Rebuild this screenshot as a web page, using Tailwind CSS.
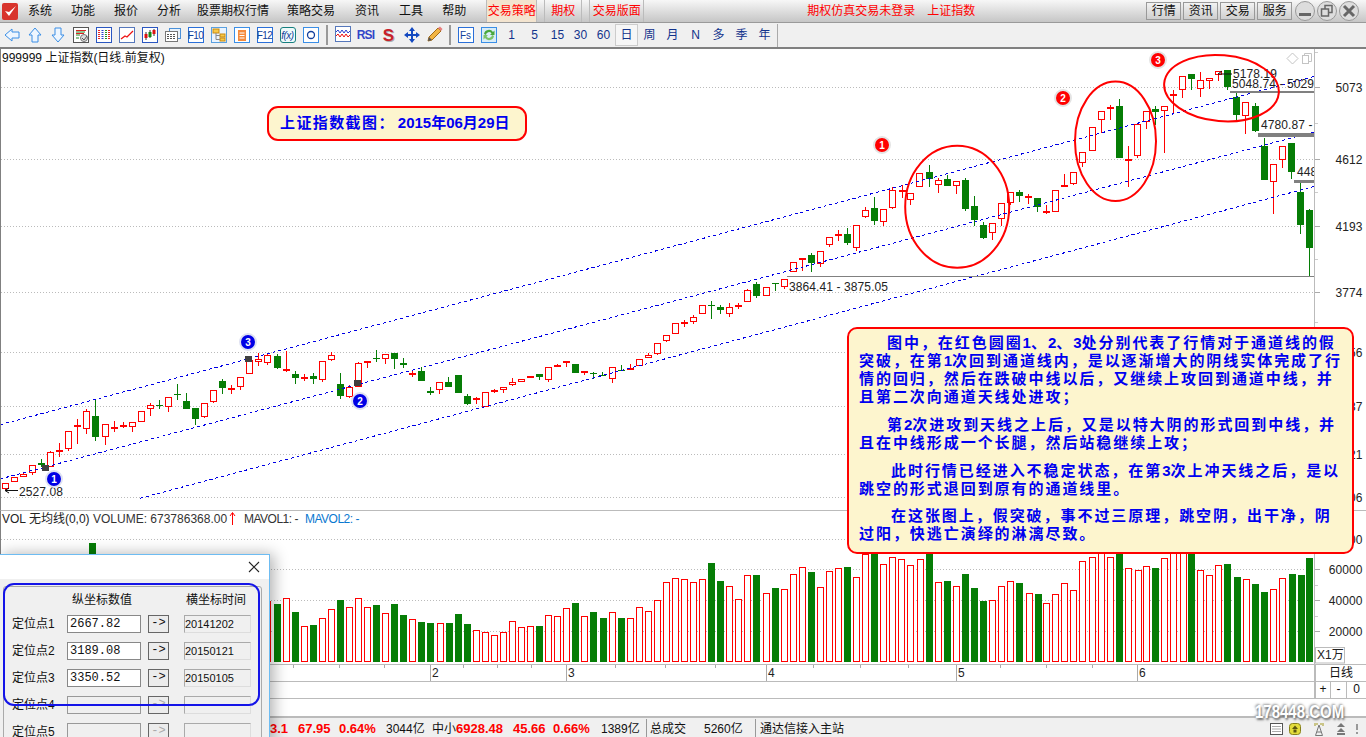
<!DOCTYPE html>
<html lang="zh-CN">
<head>
    <meta charset="UTF-8">
    <meta name="viewport" content="width=device-width, initial-scale=1.0">
    <title>上证指数 - 通道线假突破</title>
    <script src="https://cdn.jsdelivr.net/npm/@tailwindcss/browser@4"></script>
</head>
<body class="bg-white overflow-hidden font-['Liberation_Sans','Noto_Sans_CJK_SC',sans-serif] text-[12px] text-[#111]">
<div class="relative w-[1366px] h-[737px] overflow-hidden flex flex-col">

    <!-- title bar -->
    <div class="h-[23px] flex items-center border-b border-[#9a9a9a] bg-linear-to-b from-[#f7f7f7] to-[#c6c6c6] shrink-0">
        <svg class="ml-[2px] w-[16px] h-[17px]" viewBox="0 0 16 17"><rect width="16" height="17" rx="2" fill="#d8342c"/><path d="M3 8 L7 13 L14 3 L7 9 Z" fill="#fff"/></svg>
        <span class="ml-[10px]">系统</span>
        <span class="ml-[19px]">功能</span>
        <span class="ml-[19px]">报价</span>
        <span class="ml-[19px]">分析</span>
        <span class="ml-[16px]">股票期权行情</span>
        <span class="ml-[18px]">策略交易</span>
        <span class="ml-[20px]">资讯</span>
        <span class="ml-[20px]">工具</span>
        <span class="ml-[19px]">帮助</span>
        <span class="ml-[20px] h-[22px] w-[51px] flex items-center justify-center bg-[#f3e4cf] text-[#f00] border-x border-[#bbb]">交易策略</span>
        <span class="ml-[7px] h-[22px] w-[38px] flex items-center justify-center text-[#f00] border-x border-[#bbb]">期权</span>
        <span class="ml-[7px] h-[22px] w-[55px] flex items-center justify-center text-[#f00] border-x border-[#bbb]">交易版面</span>
        <span class="ml-[163px] text-[#f00]">期权仿真交易未登录</span>
        <span class="ml-[12px] text-[#f00]">上证指数</span>
        <div class="ml-[171px] flex gap-[2px]">
            <span class="w-[35px] h-[18px] flex items-center justify-center border border-[#999] bg-linear-to-b from-[#f2f2f2] to-[#cfcfcf]">行情</span>
            <span class="w-[35px] h-[18px] flex items-center justify-center border border-[#999] bg-linear-to-b from-[#f2f2f2] to-[#cfcfcf]">资讯</span>
            <span class="w-[35px] h-[18px] flex items-center justify-center border border-[#999] bg-linear-to-b from-[#f2f2f2] to-[#cfcfcf]">交易</span>
            <span class="w-[35px] h-[18px] flex items-center justify-center border border-[#999] bg-linear-to-b from-[#f2f2f2] to-[#cfcfcf]">服务</span>
        </div>
        <div class="ml-[3px] flex gap-[2px]">
            <svg class="w-[20px] h-[20px]" viewBox="0 0 20 20"><circle cx="10" cy="10" r="9.5" fill="#ddd" stroke="#999"/><rect x="4" y="12" width="12" height="3" fill="#666"/></svg>
            <svg class="w-[20px] h-[20px]" viewBox="0 0 20 20"><circle cx="10" cy="10" r="9.5" fill="#ddd" stroke="#999"/><rect x="8" y="4.5" width="7" height="7" fill="none" stroke="#666" stroke-width="1.5"/><rect x="4.5" y="8" width="7" height="7" fill="#ddd" stroke="#666" stroke-width="1.5"/></svg>
            <svg class="w-[20px] h-[20px]" viewBox="0 0 20 20"><circle cx="10" cy="10" r="9.5" fill="#ddd" stroke="#999"/><path d="M5 5 L15 15 M15 5 L5 15" stroke="#666" stroke-width="3"/></svg>
        </div>
    </div>

    <!-- toolbar -->
    <div class="h-[26px] flex items-center bg-[#f0f0f0] border-b-2 border-[#808080] shrink-0 text-[#12338c]">
        <div class="flex w-[326px]">
            <span class="w-[23px] flex justify-center"><svg class="w-[16px] h-[16px]" viewBox="0 0 16 16"><path d="M1 8 L8 2 V5 H15 V11 H8 V14 Z" fill="#eef6ff" stroke="#3a8ee6"/></svg></span>
            <span class="w-[23px] flex justify-center"><svg class="w-[16px] h-[16px]" viewBox="0 0 16 16"><path d="M8 1 L14 8 H11 V15 H5 V8 H2 Z" fill="#eef6ff" stroke="#3a8ee6"/></svg></span>
            <span class="w-[23px] flex justify-center"><svg class="w-[16px] h-[16px]" viewBox="0 0 16 16"><path d="M8 15 L14 8 H11 V1 H5 V8 H2 Z" fill="#eef6ff" stroke="#3a8ee6"/></svg></span>
            <span class="w-[23px] flex justify-center"><svg class="w-[16px] h-[16px]" viewBox="0 0 16 16"><rect x=".5" y=".5" width="15" height="15" fill="#fff" stroke="#555"/><path d="M3 3.5 H13 M3 6.5 H11" stroke="#d22"/><path d="M3 5 H12 M3 8 H7 M3 11 H6" stroke="#282"/><circle cx="11" cy="11" r="3.5" fill="#ddd" stroke="#777"/><path d="M9 11 L11 13 L14 9" fill="none" stroke="#555"/></svg></span>
            <span class="w-[23px] flex justify-center"><svg class="w-[16px] h-[16px]" viewBox="0 0 16 16"><rect x=".5" y=".5" width="15" height="15" fill="#fff" stroke="#2a56c0"/><path d="M3 3 V13" stroke="#e22" stroke-width="2" stroke-dasharray="1 1"/><path d="M6.500 3 V13" stroke="#2a3fd0" stroke-width="2" stroke-dasharray="1 1"/><path d="M10 3 V13" stroke="#292" stroke-width="2" stroke-dasharray="1 1"/><path d="M13 3 V13" stroke="#e22" stroke-width="2" stroke-dasharray="1 1"/></svg></span>
            <span class="w-[23px] flex justify-center"><svg class="w-[16px] h-[16px]" viewBox="0 0 16 16"><rect x=".5" y=".5" width="15" height="15" fill="#fff" stroke="#5577bb"/><path d="M2 12 L6 9 L8 10 L14 4" fill="none" stroke="#e11" stroke-width="1.300"/></svg></span>
            <span class="w-[23px] flex justify-center"><svg class="w-[16px] h-[16px]" viewBox="0 0 16 16"><rect x=".5" y=".5" width="15" height="15" fill="#fff" stroke="#2a56c0"/><path d="M4 5 V13 M8 3 V11 M12 2 V9" stroke="#333"/><rect x="2.500" y="7" width="3" height="4" fill="#d11"/><rect x="6.500" y="5" width="3" height="5" fill="#181"/><rect x="10.500" y="3" width="3" height="4" fill="#d11"/></svg></span>
            <span class="w-[23px] flex justify-center"><svg class="w-[16px] h-[16px]" viewBox="0 0 16 16"><rect x="4.500" y="1.500" width="11" height="10" fill="#e8f2fc" stroke="#4a90d8"/><rect x=".5" y="4.500" width="12" height="10" fill="#fff" stroke="#777"/><path d="M2 7.500 H11 M2 9.500 H11 M2 11.500 H11" stroke="#555" stroke-dasharray="2 1"/></svg></span>
            <span class="w-[23px] flex justify-center"><span class="w-[16px] h-[16px] flex items-center justify-center border border-[#2a6fd8] bg-white text-[10px] text-[#123f9c] tracking-[-0.5px]">F10</span></span>
            <span class="w-[23px] flex justify-center"><svg class="w-[16px] h-[16px]" viewBox="0 0 16 16"><rect x=".5" y=".5" width="15" height="15" fill="#eaf4ff" stroke="#5aa0e0"/><rect x="2" y="2" width="6" height="4" fill="#f7c948" stroke="#c88a10"/><rect x="9" y="7" width="5" height="3" fill="#f7c948" stroke="#c88a10"/><rect x="9" y="11" width="5" height="3" fill="#f7c948" stroke="#c88a10"/><path d="M5 6 V12.500 H9 M5 8.500 H9" fill="none" stroke="#888"/></svg></span>
            <span class="w-[23px] flex justify-center"><svg class="w-[16px] h-[16px]" viewBox="0 0 16 16"><rect x=".5" y=".5" width="15" height="15" fill="#fff" stroke="#3a8ee6"/><rect x="4" y="3" width="8" height="11" fill="#f58a3c"/><path d="M5.500 6 H10.500 M5.500 8.500 H10.500 M5.500 11 H10.500" stroke="#fff"/></svg></span>
            <span class="w-[23px] flex justify-center"><span class="w-[16px] h-[16px] flex items-center justify-center border border-[#2a6fd8] bg-white text-[10px] text-[#123f9c] tracking-[-0.5px]">F12</span></span>
            <span class="w-[23px] flex justify-center"><span class="w-[16px] h-[16px] flex items-center justify-center rounded-[3px] border border-[#167f7f] bg-[#eefafa] text-[10px] italic text-[#123f9c] tracking-[-0.5px]">f(x)</span></span>
            <span class="w-[23px] flex justify-center"><svg class="w-[16px] h-[16px]" viewBox="0 0 16 16"><rect x=".5" y=".5" width="15" height="15" fill="#fff" stroke="#3a8ee6"/><circle cx="8" cy="8" r="3.500" fill="none" stroke="#123f9c" stroke-width="1.300"/></svg></span>
        </div>
        <span class="w-[2px] h-[20px] bg-[#999]"></span>
        <div class="flex ml-[3px]">
            <span class="w-[23px] flex justify-center"><svg class="w-[16px] h-[16px]" viewBox="0 0 16 16"><rect x=".5" y=".5" width="15" height="15" fill="#fff" stroke="#5577bb"/><path d="M1 6 L3 4 L5 7 L7 4 L9 7 L11 4 L13 7 L15 5" fill="none" stroke="#2a3fd0"/><path d="M1 10 L3 8 L5 11 L7 8 L9 11 L11 8 L13 11 L15 9" fill="none" stroke="#e11"/></svg></span>
            <span class="w-[23px] flex justify-center items-center font-bold text-[12px] text-[#3344c8] tracking-[-0.8px]">RSI</span>
            <span class="w-[23px] flex justify-center items-center font-bold text-[17px] leading-[17px] text-[#c8202a] [text-shadow:1px_1px_0_#aaa]">S</span>
            <span class="w-[23px] flex justify-center"><svg class="w-[18px] h-[18px]" viewBox="0 0 18 18"><path d="M9 1 L12 5 H10 V8 H13 V6 L17 9 L13 12 V10 H10 V13 H12 L9 17 L6 13 H8 V10 H5 V12 L1 9 L5 6 V8 H8 V5 H6 Z" fill="#1248c0"/></svg></span>
            <span class="w-[23px] flex justify-center"><svg class="w-[16px] h-[16px]" viewBox="0 0 16 16"><path d="M1 15 L2 11 L11 2 L14 5 L5 14 Z" fill="#f2b544" stroke="#a36a16"/><path d="M11 2 L13 0.500 L15.500 3 L14 5 Z" fill="#e88080"/><path d="M1 15 L2 11 L5 14 Z" fill="#555"/></svg></span>
        </div>
        <span class="ml-[3px] w-[2px] h-[20px] bg-[#999]"></span>
        <span class="ml-[3px] w-[23px] flex justify-center"><span class="w-[16px] h-[16px] flex items-center justify-center border border-[#2a6fd8] bg-white text-[10px] text-[#123f9c]">Fs</span></span>
        <span class="w-[23px] flex justify-center"><svg class="w-[16px] h-[16px]" viewBox="0 0 16 16"><rect x=".5" y=".5" width="15" height="15" fill="#d8ecf8" stroke="#3a8ee6"/><path d="M3 7 A5 5 0 0 1 12 5 L13.500 3.500 V8 H9 L10.500 6.500 A3 3 0 0 0 5 8 Z" fill="#49a83c"/><path d="M13 9 A5 5 0 0 1 4 11 L2.500 12.500 V8 H7 L5.500 9.500 A3 3 0 0 0 11 8 Z" fill="#7cc46a"/></svg></span>
        <div class="flex items-center">
            <span class="w-[23px] text-center">1</span>
            <span class="w-[23px] text-center">5</span>
            <span class="w-[23px] text-center">15</span>
            <span class="w-[23px] text-center">30</span>
            <span class="w-[23px] text-center">60</span>
            <span class="w-[23px] h-[22px] flex items-center justify-center bg-[#f6f6f6] border border-[#ccc]">日</span>
            <span class="w-[23px] text-center">周</span>
            <span class="w-[23px] text-center">月</span>
            <span class="w-[23px] text-center">N</span>
            <span class="w-[23px] text-center">多</span>
            <span class="w-[23px] text-center">季</span>
            <span class="w-[23px] text-center">年</span>
        </div>
        <span class="ml-[1px] w-px h-[23px] bg-[#aaa]"></span>
    </div>

    <!-- price pane, svg coordinates are screen coordinates -->
    <div class="h-[462px] border-b border-[#bbb] border-l border-l-[#808080] shrink-0">
        <svg id="price" class="w-[1365px] h-[461px]" viewBox="1 49 1365 461">
            <defs><clipPath id="paneclip"><rect x="0" y="49" width="1314" height="461"/></clipPath></defs>
            <g id="pricegrid"></g>
            <g id="candles"></g>
            <g stroke="#0000e6" stroke-width="1" stroke-dasharray="3 3" shape-rendering="crispEdges">
                <line x1="0" y1="424.700" x2="1314" y2="76.500"/>
                <line x1="0" y1="479" x2="1314" y2="132"/>
                <line x1="140" y1="498.300" x2="1314" y2="186.500"/>
            </g>
            <g fill="#808080" shape-rendering="crispEdges">
                <rect x="787" y="276" width="527" height="1"/>
                <rect x="1230" y="91" width="84" height="2"/>
                <rect x="1258" y="133" width="56" height="4"/>
                <rect x="1294" y="180" width="20" height="3"/>
            </g>
            <g fill="#404040">
                <rect x="42" y="465" width="7" height="6"/>
                <rect x="245" y="356" width="7" height="6"/>
                <rect x="354" y="380" width="7" height="6"/>
            </g>
            <g clip-path="url(#paneclip)" font-size="12" letter-spacing=".1" fill="#222">
                <text x="19" y="496">2527.08</text>
                <path d="M5 490.500 H18 M5 490.500 L9 488 M5 490.500 L9 493" stroke="#111" fill="none"/>
                <text x="789" y="291">3864.41 - 3875.05</text>
                <text x="1233" y="78">5178.19</text>
                <path d="M1218 74 L1222 71 M1218 74 H1232" stroke="#111" fill="none"/>
                <text x="1232" y="87.500">5048.74 - 5029</text>
                <text x="1261" y="129">4780.87 -</text>
                <text x="1297" y="176">448</text>
            </g>
            <g fill="none" stroke="#f00" stroke-width="2">
                <ellipse cx="957.200" cy="206.800" rx="52" ry="61"/>
                <ellipse cx="1115.500" cy="141.300" rx="40.500" ry="59.700"/>
                <ellipse cx="1221.500" cy="88.200" rx="57.500" ry="33" transform="rotate(5 1221.500 88.200)"/>
            </g>
            <g text-anchor="middle" font-size="10" font-weight="bold" fill="#fff" stroke-width="2">
                <circle cx="882" cy="145" r="8" fill="#f00" stroke="#e4e4e4"/><text x="882" y="148.500">1</text>
                <circle cx="1063" cy="98" r="8" fill="#f00" stroke="#e4e4e4"/><text x="1063" y="101.500">2</text>
                <circle cx="1158" cy="60" r="8" fill="#f00" stroke="#e4e4e4"/><text x="1158" y="63.500">3</text>
                <circle cx="54" cy="479" r="8" fill="#0000e6" stroke="#dfe2f2"/><text x="54" y="482.500">1</text>
                <circle cx="360" cy="401" r="8" fill="#0000e6" stroke="#dfe2f2"/><text x="360" y="404.500">2</text>
                <circle cx="248" cy="342" r="8" fill="#0000e6" stroke="#dfe2f2"/><text x="248" y="345.500">3</text>
            </g>
            <path d="M1292.500 53 L1298 58.500 L1292.500 64 L1287 58.500 Z" fill="none" stroke="#c4c4c4"/>
            <rect x="1302.500" y="55.500" width="6" height="8" fill="#fff" stroke="#c4c4c4"/>
            <path d="M1304.500 55 V53.500 H1311.500 V61.500 H1309" fill="none" stroke="#c4c4c4"/>
            <text x="2" y="62" font-size="12" fill="#111">999999 上证指数(日线.前复权)</text>
        </svg>
    </div>

    <!-- volume pane -->
    <div class="h-[154px] border-b border-[#bbb] border-l border-l-[#808080] shrink-0">
        <svg id="volume" class="w-[1365px] h-[153px]" viewBox="1 511 1365 153">
            <g id="volgrid"></g>
            <g id="volbars"></g>
            <text x="2" y="523" font-size="12" fill="#222">VOL 无均线(0,0)</text>
            <text x="93" y="523" font-size="12" fill="#333">VOLUME: 673786368.00</text>
            <path d="M232.500 525 V513 M230 516 L232.500 512.500 L235 516" fill="none" stroke="#f00"/>
            <text x="244" y="523" font-size="12" letter-spacing="-.5" fill="#333">MAVOL1: -</text>
            <text x="305" y="523" font-size="12" letter-spacing="-.5" fill="#0a78d0">MAVOL2: -</text>
            <rect x="1315.500" y="647.500" width="29" height="15.500" fill="#fff" stroke="#bbb"/>
            <text x="1317" y="659" font-size="12" fill="#222">X1万</text>
        </svg>
    </div>

    <!-- time axis -->
    <div class="h-[17px] flex border-b border-[#bbb] shrink-0">
        <svg id="timeaxis" class="w-[1314px] h-[16px]" viewBox="0 665 1314 16"></svg>
        <div class="flex-1 flex items-center justify-center border-l-2 border-[#bbb]">日线</div>
    </div>
    <div class="h-[17px] flex border-b border-[#bbb] shrink-0">
        <div class="w-[1314px]"></div>
        <div class="flex-1 flex border-l-2 border-[#bbb] text-center leading-[15px]">
            <span class="w-[15px] border-r border-[#bbb]">+</span>
            <span class="w-[16px] border-r border-[#bbb]">-</span>
            <span class="flex-1">0</span>
        </div>
    </div>
    <div class="h-[19px] border-b-2 border-[#bbb] shrink-0"></div>

    <!-- status bar -->
    <div class="h-[21px] flex items-center bg-[#f0f0f0] shrink-0 pl-[270px] whitespace-nowrap">
        <span class="w-[28px] font-bold text-[13px] text-[#f00]">3.1</span>
        <span class="w-[41px] font-bold text-[13px] text-[#f00]">67.95</span>
        <span class="w-[47px] font-bold text-[13px] text-[#f00]">0.64%</span>
        <span class="w-[46px]">3044亿</span>
        <span class="w-[24px]">中小</span>
        <span class="w-[57px] font-bold text-[13px] text-[#f00]">6928.48</span>
        <span class="w-[40px] font-bold text-[13px] text-[#f00]">45.66</span>
        <span class="w-[48px] font-bold text-[13px] text-[#f00]">0.66%</span>
        <span class="w-[45px]">1389亿</span>
        <span class="h-[19px] w-px bg-[#999]"></span>
        <span class="ml-[3px] w-[54px]">总成交</span>
        <span class="w-[51px]">5260亿</span>
        <span class="h-[19px] w-px bg-[#999]"></span>
        <span class="ml-[4px]">通达信接入主站</span>
        <div class="ml-auto mr-[7px] flex items-center gap-[6px]">
            <svg class="w-[13px] h-[12px]" viewBox="0 0 13 12"><rect x=".5" y=".5" width="12" height="11" fill="#fff" stroke="#555"/><path d="M2 3.500 H11 M2 6 H11 M2 8.500 H11" stroke="#aaa"/></svg>
            <svg class="w-[12px] h-[12px]" viewBox="0 0 12 12"><rect x=".5" y=".5" width="11" height="11" rx="3" fill="#e3dc3c" stroke="#86801a"/><path d="M6 2.500 L9 6 H3 Z M4.500 6.500 H7.500 V9.500 H4.500 Z" fill="#5b5610"/></svg>
            <svg class="ml-[6px] w-[12px] h-[14px]" viewBox="0 0 12 14"><path d="M6 3 L2.500 13.500 H9.500 Z M3.800 10 H8.200" fill="none" stroke="#777"/><path d="M2 1 V4 M10 1 V4 M4 1 V3 M8 1 V3" stroke="#a39a20"/></svg>
            <svg class="ml-[5px] w-[10px] h-[12px]" viewBox="0 0 10 12"><path d="M5 0 L9 4 H1 Z M5 5 L9 9 H1 Z M1 10 H9 V12 H1 Z" fill="#777"/></svg>
            <svg class="ml-[3px] w-[4px] h-[10px]" viewBox="0 0 4 10"><rect x="1" y="0" width="2" height="6" fill="#999"/><rect x="1" y="8" width="2" height="2" fill="#999"/></svg>
        </div>
    </div>

    <!-- top note -->
    <div class="absolute left-[267px] top-[106px] w-[260px] h-[35px] rounded-[11px] border-2 border-[#f00] bg-[#fdf5ce] flex items-center pl-[11px] whitespace-nowrap font-bold text-[15px] text-[#0000f0] tracking-[1.400px]">上证指数截图：<span class="ml-[3px] tracking-normal">2015年06月29日</span></div>

    <!-- explanation note -->
    <div class="absolute left-[847px] top-[327px] w-[507px] h-[227px] rounded-[10px] border-2 border-[#f00] bg-[#fdf5ce] pl-[10px] pt-[5px] whitespace-nowrap font-bold text-[15px] leading-[18px] text-[#0000f0] tracking-[1.950px]">
        <div class="mb-[10px]">
            <div class="pl-[28px]">图中，在红色圆圈<span class="tracking-normal">1</span>、<span class="tracking-normal">2</span>、<span class="tracking-normal">3</span>处分别代表了行情对于通道线的假</div>
            <div>突破，在第<span class="tracking-normal">1</span>次回到通道线内，是以逐渐增大的阴线实体完成了行</div>
            <div>情的回归，然后在跌破中线以后，又继续上攻回到通道中线，并</div>
            <div>且第二次向通道天线处进攻；</div>
        </div>
        <div class="mb-[10px]">
            <div class="pl-[28px]">第<span class="tracking-normal">2</span>次进攻到天线之上后，又是以特大阴的形式回到中线，并</div>
            <div>且在中线形成一个长腿，然后站稳继续上攻；</div>
        </div>
        <div class="mb-[9px]">
            <div class="pl-[32px]">此时行情已经进入不稳定状态，在第<span class="tracking-normal">3</span>次上冲天线之后，是以</div>
            <div>跳空的形式退回到原有的通道线里。</div>
        </div>
        <div>
            <div class="pl-[32px]">在这张图上，假突破，事不过三原理，跳空阴，出干净，阴</div>
            <div>过阳，快逃亡演绎的淋漓尽致。</div>
        </div>
    </div>

    <!-- locate dialog, cut off by the bottom of the window -->
    <div class="absolute left-[-1px] top-[554px] w-[271px] h-[190px] border border-[#6dbcf2] bg-[#f0f0f0] shadow-[4px_0_14px_rgba(0,0,0,0.3)]">
        <div class="h-[24px] bg-white flex items-center justify-end pr-[9px]">
            <svg class="w-[12px] h-[12px]" viewBox="0 0 12 12"><path d="M1 1 L11 11 M11 1 L1 11" stroke="#222" stroke-width="1.100"/></svg>
        </div>
        <div class="ml-[3px] mt-[7px] w-[259px] h-[160px] border border-[#aaa] rounded-[3px] pl-[8px]">
            <div class="flex h-[14px] mt-[6px] mb-[8px] leading-[14px]">
                <span class="ml-[60px] w-[114px]">纵坐标数值</span>
                <span>横坐标时间</span>
            </div>
            <div class="flex items-center h-[18px] mb-[9px]">
                <span class="w-[55px]">定位点1</span>
                <span class="w-[74px] h-[18px] bg-white border border-[#888] pl-[2px] font-['Liberation_Mono',monospace] leading-[16px]">2667.82</span>
                <span class="ml-[7px] w-[21px] h-[18px] border border-[#666] bg-[#ececec] text-center font-['Liberation_Mono',monospace] leading-[15px]">-&gt;</span>
                <span class="ml-[15px] w-[67px] h-[18px] border border-[#aaa] border-r-[#ddd] border-b-[#ddd] text-[11px] leading-[16px]">20141202</span>
            </div>
            <div class="flex items-center h-[18px] mb-[9px]">
                <span class="w-[55px]">定位点2</span>
                <span class="w-[74px] h-[18px] bg-white border border-[#888] pl-[2px] font-['Liberation_Mono',monospace] leading-[16px]">3189.08</span>
                <span class="ml-[7px] w-[21px] h-[18px] border border-[#666] bg-[#ececec] text-center font-['Liberation_Mono',monospace] leading-[15px]">-&gt;</span>
                <span class="ml-[15px] w-[67px] h-[18px] border border-[#aaa] border-r-[#ddd] border-b-[#ddd] text-[11px] leading-[16px]">20150121</span>
            </div>
            <div class="flex items-center h-[18px] mb-[9px]">
                <span class="w-[55px]">定位点3</span>
                <span class="w-[74px] h-[18px] bg-white border border-[#888] pl-[2px] font-['Liberation_Mono',monospace] leading-[16px]">3350.52</span>
                <span class="ml-[7px] w-[21px] h-[18px] border border-[#666] bg-[#ececec] text-center font-['Liberation_Mono',monospace] leading-[15px]">-&gt;</span>
                <span class="ml-[15px] w-[67px] h-[18px] border border-[#aaa] border-r-[#ddd] border-b-[#ddd] text-[11px] leading-[16px]">20150105</span>
            </div>
            <div class="flex items-center h-[18px] mb-[9px]">
                <span class="w-[55px]">定位点4</span>
                <span class="w-[74px] h-[18px] border border-[#999]"></span>
                <span class="ml-[7px] w-[21px] h-[18px] border border-[#666] text-[#aaa] bg-[#ececec] text-center font-['Liberation_Mono',monospace] leading-[15px]">-&gt;</span>
                <span class="ml-[15px] w-[67px] h-[18px] border border-[#aaa] border-r-[#ddd] border-b-[#ddd]"></span>
            </div>
            <div class="flex items-center h-[18px]">
                <span class="w-[55px]">定位点5</span>
                <span class="w-[74px] h-[18px] border border-[#999]"></span>
                <span class="ml-[7px] w-[21px] h-[18px] border border-[#666] text-[#aaa] bg-[#ececec] text-center font-['Liberation_Mono',monospace] leading-[15px]">-&gt;</span>
                <span class="ml-[15px] w-[67px] h-[18px] border border-[#aaa] border-r-[#ddd] border-b-[#ddd]"></span>
            </div>
        </div>
    </div>
    <div class="absolute left-[3px] top-[583px] w-[257px] h-[123px] rounded-[11px] border-2 border-[#1414e8]"></div>

    <!-- watermark -->
    <div class="absolute left-[1255px] top-[702px] font-bold text-[15px] leading-[20px] text-white scale-y-125 [text-shadow:1px_1px_2px_#666,-1px_-1px_2px_#999] whitespace-nowrap">178448.COM</div>
</div>

<script>
    const RED = '#f00';
    const GREEN = '#067d06';
    const svgNs = (id, html) => { document.getElementById(id).innerHTML = html; };

    // candles read off the 3x crops: [x, high, bodyTop, bodyBottom, low, isGreen]
    const candleSets = [
        { ox: 0, oy: 330, rows: [
            [16,460,460,478,480,0],[43,442,442,457,457,0],[70,428,431,440,442,0],[97,406,406,430,435,0],[124,388,400,405,410,1],
            [151,363,367,410,412,0],[178,340,361,365,380,0],[205,304,304,358,362,0],[232,267,284,289,342,0],[259,238,244,298,312,0],
            [286,210,259,320,333,1],[316,283,283,322,345,0],[343,273,290,296,305,0],[370,277,284,289,295,0],[397,277,277,292,305,0],
            [424,244,244,277,277,0],[451,220,226,238,258,0],[478,210,225,227,238,1],[505,202,202,230,245,0],[532,162,192,194,210,1],
            [559,189,213,236,238,1],[586,235,235,266,284,1],[613,220,220,260,265,0],[640,181,181,217,220,0],[667,148,154,174,192,1],
            [694,165,175,178,192,0],[721,142,142,172,179,0],[748,78,90,133,133,0],[775,68,88,96,108,0],[802,72,76,100,104,0],
            [832,72,78,113,117,1],[859,62,118,124,126,0],[886,124,132,143,162,1],[913,132,142,148,153,0],[940,128,138,147,162,1],
            [967,94,94,150,157,0],[994,66,76,91,92,0],[1021,128,163,197,207,1],[1048,165,172,200,205,0],[1075,97,100,170,172,0],
            [1102,92,92,100,113,0],[1129,60,84,86,95,1],[1156,73,73,88,101,0],[1183,70,70,86,117,1],[1210,84,99,106,114,1],
            [1237,120,128,131,140,0],[1264,112,124,152,153,1],[1291,172,183,190,195,1],[1318,157,157,181,192,0],[1345,140,155,170,172,1]
        ]},
        { ox: 450, oy: 200, rows: [
            [25,525,525,578,578,1],[52,582,588,612,614,1],[79,590,595,600,612,0],[106,577,577,620,622,0],[133,567,571,576,578,0],
            [160,561,561,571,578,0],[187,535,546,556,558,0],[214,538,538,547,547,0],[241,527,527,535,535,0],[268,522,522,532,540,1],
            [295,502,502,540,546,0],[322,493,496,502,502,0],[349,484,484,489,500,0],[376,492,492,518,518,1],[403,512,512,520,524,0],
            [430,517,520,523,536,1],[457,517,525,526,528,1],[487,502,502,538,548,0],[514,496,509,511,512,1],[541,492,505,509,510,0],
            [568,478,478,497,497,0],[595,460,466,475,475,0],[622,430,430,461,465,0],[649,406,406,422,426,0],[676,370,370,403,403,0],
            [703,360,366,371,382,0],[730,345,352,365,372,0],[757,316,316,341,341,0],[784,304,316,318,356,1],[811,316,321,329,342,1],
            [838,310,320,342,351,0],[865,310,315,322,328,0],[892,268,271,307,307,0],[919,246,252,288,293,1],[949,260,260,289,289,0],
            [976,248,248,250,272,1],[1003,236,236,262,267,0],[1030,187,187,217,217,0],[1057,173,173,181,212,0],[1084,160,165,188,215,1],
            [1111,152,152,193,200,0],[1138,112,112,134,140,0],[1165,90,103,109,122,0],[1192,85,102,128,134,1],[1219,76,76,143,152,0],
            [1246,22,31,50,54,0],[1273,-10,25,62,76,1],[1300,28,28,67,77,0],[1327,-40,-30,25,27,0]
        ]},
        { ox: 900, oy: 40, rows: [
            [5,435,450,453,475,0],[31,460,460,479,495,0],[58,398,398,440,440,0],[88,375,396,418,440,1],[115,415,421,436,458,0],
            [142,405,418,437,437,1],[169,422,422,438,461,0],[196,415,420,507,512,1],[223,468,498,540,557,1],[250,547,555,594,596,1],
            [277,550,550,578,600,0],[304,490,490,538,558,0],[331,457,457,488,495,0],[358,450,457,467,486,1],[385,463,467,471,491,0],
            [412,475,475,500,515,1],[439,495,514,518,523,0],[466,451,451,515,515,0],[493,402,436,442,442,0],[520,397,397,433,436,0],
            [547,337,337,369,380,0],[577,262,262,334,334,0],[604,214,214,241,280,0],[631,195,201,205,240,0],[658,177,198,353,353,1],
            [685,318,357,361,440,0],[712,253,253,347,353,0],[739,214,214,247,267,0],[766,198,208,215,255,1],[793,199,199,214,338,0],
            [820,150,163,167,221,0],[847,108,108,151,173,0],[874,102,102,116,150,1],[901,96,121,147,170,0],[928,115,115,123,147,0],
            [955,94,94,106,123,0],[982,90,90,140,150,1],[1009,160,171,224,241,1],[1036,187,187,227,281,0],[1066,190,198,273,275,1],
            [1093,295,317,419,419,1],[1120,373,373,425,522,0],[1147,319,319,361,384,0],[1174,310,310,395,416,1],[1201,430,456,554,582,1],
            [1228,507,510,623,707,1]
        ]}
    ];

    // volume bars read off the crops: [x, top, isGreen]
    const volumeSets = [
        { ox: 265, oy: 540, sx: 3, rows: [
            [-520,8,1],[5,183,0],[37,192,1],[64,175,0],[91,216,1],[118,259,0],[145,255,1],[172,235,0],[199,208,0],[226,180,1],[253,202,0],
            [280,175,0],[307,202,0],[334,195,1],[361,220,0],[388,192,1],[415,225,1],[442,238,0],[469,246,1],[496,249,1],[526,250,0],
            [553,249,1],[580,222,1],[607,252,1],[634,271,0],[661,277,0],[688,286,0],[715,277,0],[742,244,0],[769,262,0],[796,259,0],
            [823,258,1],[850,226,0],[877,229,0]
        ]},
        { ox: 560, oy: 540, sx: 3, rows: [
            [19,205,0],[46,189,1],[73,229,0],[100,216,1],[130,234,1],[157,217,0],[184,234,1],[211,235,0],[238,202,0],[265,214,0],
            [292,181,0],[319,127,0],[346,115,0],[373,118,0],[400,127,0],[427,118,0],[454,69,1],[481,123,1],[508,139,0],[535,178,0],
            [562,106,0],[589,105,1],[619,160,0],[646,144,1],[673,148,0],[700,103,0],[727,82,0],[754,96,1],[781,142,0],[808,94,0],
            [835,85,0],[862,81,1],[889,112,0]
        ]},
        { ox: 840, oy: 550, sx: 2.981, rows: [
            [75,12,0],[102,0,1],[129,43,0],[156,22,0],[183,28,0],[210,46,0],[237,28,0],[265,0,1],[292,97,0],[319,93,1],[346,109,0],
            [373,72,1],[400,114,1],[427,153,1],[454,151,0],[481,109,0],[508,94,0],[535,99,1],[562,130,0],[589,132,1],[615,160,0],
            [642,133,0],[669,100,0],[696,121,0],[722,34,0],[752,22,0],[779,8,0],[806,22,0],[833,0,1],[860,55,0],[887,61,0],
            [913,49,0],[940,54,1],[967,25,0],[994,8,0],[1021,8,0],[1047,8,1],[1074,61,0],[1101,76,0],[1128,46,0],[1155,42,1],
            [1182,81,1],[1209,88,0],[1238,102,1],[1265,126,1],[1292,118,0],[1319,85,0],[1346,72,1],[1373,75,1],[1399,24,1]
        ]}
    ];

    function drawCandles() {
        let html = '';
        candleSets.forEach(set => {
            set.rows.forEach(([zx, hi, top, bot, lo, isGreen]) => {
                const cx = Math.round(set.ox + zx / 3);
                const y = v => Math.round(set.oy + v / 3);
                const color = isGreen ? GREEN : RED;
                html += `<line x1="${cx + 0.5}" x2="${cx + 0.5}" y1="${y(hi)}" y2="${y(lo)}" stroke="${color}"/>`;
                if (isGreen) {
                    html += `<rect x="${cx - 3}" y="${y(top)}" width="7" height="${Math.max(1, y(bot) - y(top))}" fill="${color}"/>`;
                } else {
                    html += `<rect x="${cx - 2.5}" y="${y(top) + 0.5}" width="6" height="${Math.max(1, y(bot) - y(top) - 1)}" fill="#fff" stroke="${color}"/>`;
                }
            });
        });
        svgNs('candles', `<g shape-rendering="crispEdges">${html}</g>`);
    }

    function drawVolumes() {
        const base = 662;
        let html = '';
        volumeSets.forEach(set => {
            set.rows.forEach(([zx, ztop, isGreen]) => {
                const cx = Math.round(set.ox + zx / set.sx);
                const top = Math.round(set.oy + ztop / 3);
                if (isGreen) {
                    html += `<rect x="${cx - 3}" y="${top}" width="7" height="${base - top}" fill="${GREEN}"/>`;
                } else {
                    html += `<rect x="${cx - 2.5}" y="${top + 0.5}" width="6" height="${base - top - 1}" fill="#fff" stroke="${RED}"/>`;
                }
            });
        });
        svgNs('volbars', `<g shape-rendering="crispEdges">${html}</g>`);
    }

    function drawAxis(id, levels, hTicks) {
        let html = `<rect x="1314" y="0" width="1" height="800" fill="#bbb"/>`;
        levels.forEach(([y, label]) => {
            html += `<line x1="1" x2="1314" y1="${y + 0.5}" y2="${y + 0.5}" stroke="#bbb" stroke-dasharray="1 2"/>`;
            html += `<line x1="1315" x2="1320" y1="${y + 0.5}" y2="${y + 0.5}" stroke="#aaa"/>`;
            html += `<text x="${1362.5 - label.length * 6.75}" y="${y + 4.5}" font-size="12" letter-spacing=".1" fill="#222">${label}</text>`;
        });
        hTicks.forEach(y => {
            html += `<line x1="1315" x2="1318" y1="${y + 0.5}" y2="${y + 0.5}" stroke="#ccc"/>`;
        });
        svgNs(id, `<g shape-rendering="crispEdges">${html}</g>`);
    }

    function drawTimeAxis() {
        let html = '';
        [293, 339, 384, 463, 497, 531, 615, 665, 715, 813, 860, 908, 1000, 1046, 1092].forEach(x => {
            html += `<line x1="${x + 0.5}" x2="${x + 0.5}" y1="665" y2="668" stroke="#aaa"/>`;
        });
        [[430, '2'], [566, '3'], [766, '4'], [956, '5'], [1137, '6']].forEach(([x, label]) => {
            html += `<line x1="${x + 0.5}" x2="${x + 0.5}" y1="665" y2="681" stroke="#aaa"/>`;
            html += `<text x="${x + 2}" y="677" font-size="12" fill="#222">${label}</text>`;
        });
        svgNs('timeaxis', html);
    }

    drawCandles();
    drawVolumes();
    drawAxis('pricegrid', [[87, '5073'], [159, '4612'], [226, '4193'], [292, '3774'], [352, '3356'], [406, '2937'], [454, '2521'], [497, '2106']], [52, 123, 192, 259, 322]);
    drawAxis('volgrid', [[539, '80000'], [569, '60000'], [600, '40000'], [631, '20000']], [585, 616, 647]);
    drawTimeAxis();
</script>
</body>
</html>
